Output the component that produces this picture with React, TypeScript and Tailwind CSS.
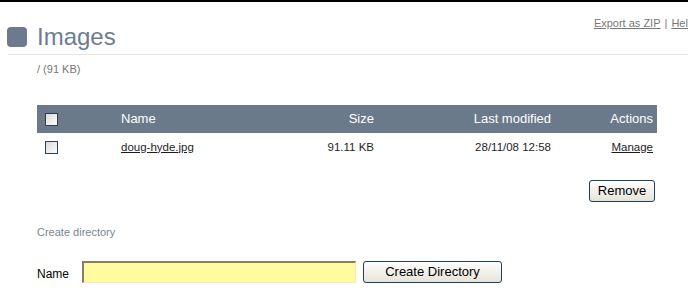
import React from "react";

const Box = () => (
  <div className="w-[13px] h-[13px] border border-[#2a4058] bg-gradient-to-br from-[#dcd9d0] to-white" />
);

export default function App() {
  return (
    <div className="w-[688px] h-[302px] overflow-hidden bg-white border-t-2 border-black font-['Liberation_Sans',Arial,sans-serif]">
      <div className="w-[702px]">
        <div className="flex items-start pl-[7px] pr-[8px]">
          <div className="flex items-center gap-[10px] pt-[21px]">
            <div className="w-[20px] h-[20px] rounded-[4px] bg-[#6b7a8c]" />
            <div className="text-[24px] leading-[28px] text-[#6c7d8f]">Images</div>
          </div>
          <div className="ml-auto pt-[15px] text-[11px] leading-[13px] text-[#777]">
            <span className="underline">Export as ZIP</span>
            <span className="mx-[4px]">|</span>
            <span className="underline">Help</span>
          </div>
        </div>
        <div className="ml-[8px] mt-[3px] border-b border-[#e6e6e6]" />
        <div className="pl-[37px] pt-[8px] text-[11px] leading-[13px] text-[#777]">/ (91 KB)</div>

        <div className="ml-[37px] mt-[29px] w-[620px]">
          <div className="grid grid-cols-[84px_170px_83px_177px_102px] pr-[4px] h-[28px] items-center bg-[#6b7a8b] text-[13px] text-white">
            <div className="pl-[8px]"><Box /></div>
            <div>Name</div>
            <div className="text-right">Size</div>
            <div className="text-right">Last modified</div>
            <div className="text-right">Actions</div>
          </div>
          <div className="grid grid-cols-[84px_170px_83px_177px_102px] pr-[4px] h-[29px] items-center text-[11.5px] text-[#1e1e1e]">
            <div className="pl-[8px]"><Box /></div>
            <div className="underline">doug-hyde.jpg</div>
            <div className="text-right">91.11 KB</div>
            <div className="text-right">28/11/08 12:58</div>
            <div className="text-right underline">Manage</div>
          </div>
          <div className="flex justify-end pr-[2px] mt-[18px]">
            <button className="h-[22px] w-[66px] rounded-[3px] border border-[#1f3f63] bg-gradient-to-b from-white to-[#e6e3d8] text-[13px] text-black font-['Liberation_Sans',Arial,sans-serif]">
              Remove
            </button>
          </div>
        </div>

        <div className="pl-[37px] mt-[24px] text-[11px] leading-[13px] text-[#7b8590]">Create directory</div>

        <div className="pl-[37px] mt-[21px] flex items-center">
          <div className="w-[45px] text-[12px] text-black pt-[5px]">Name</div>
          <div className="w-[274px] h-[22px] bg-[#fffb9f] border-t-2 border-l-2 border-t-[#86805f] border-l-[#86805f] border-b border-r border-b-[#eeeacc] border-r-[#eeeacc]" />
          <button className="ml-[7px] h-[22px] w-[139px] rounded-[3px] border border-[#1f3f63] bg-gradient-to-b from-white to-[#e6e3d8] text-[13px] text-black font-['Liberation_Sans',Arial,sans-serif]">
            Create Directory
          </button>
        </div>
      </div>
    </div>
  );
}
